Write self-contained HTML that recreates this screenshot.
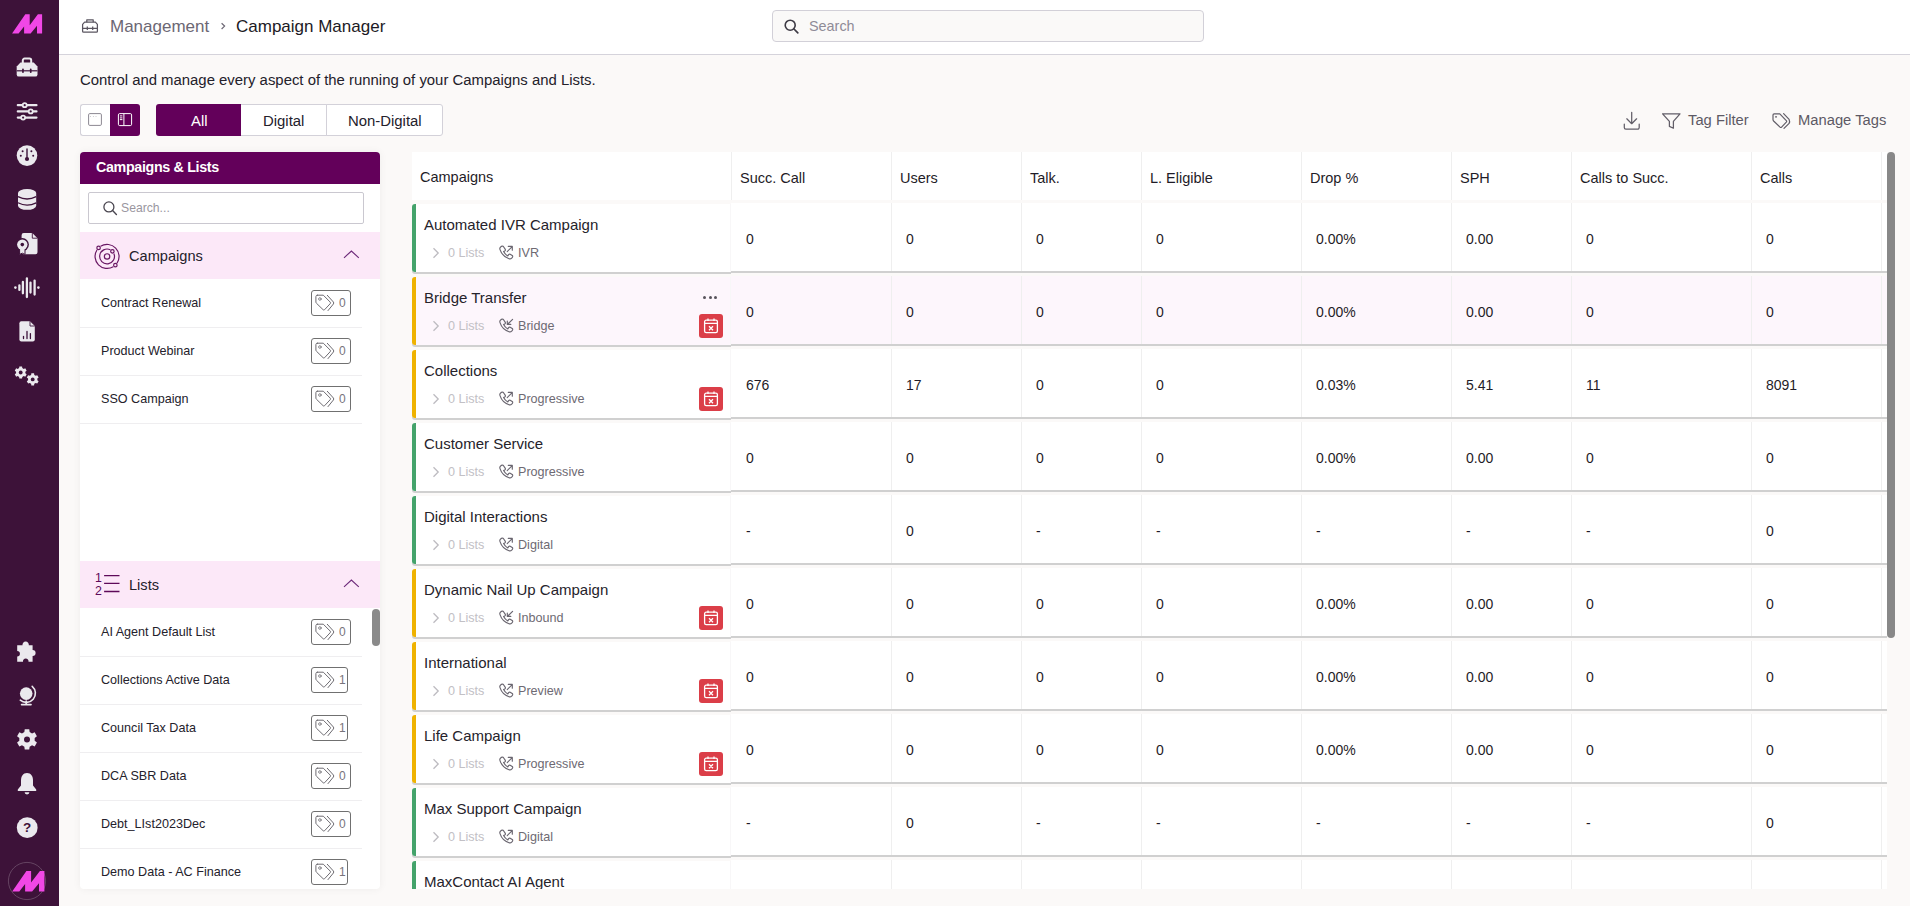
<!DOCTYPE html>
<html><head><meta charset="utf-8">
<style>
*{box-sizing:border-box;margin:0;padding:0}
html,body{width:1910px;height:906px;overflow:hidden}
body{position:relative;background:#fbf9f8;font-family:"Liberation Sans",sans-serif;color:#24212b}
.abs{position:absolute}
.t{position:absolute;white-space:nowrap;line-height:1}
#sb{left:0;top:0;width:59px;height:906px;background:#3d1239}
.si{position:absolute;left:17px;width:20px;height:20px}
#hdr{left:59px;top:0;width:1851px;height:55px;background:#fff;border-bottom:1px solid #d5d3db}
#srch{left:772px;top:10px;width:432px;height:32px;background:#faf9f8;border:1px solid #d2d0d8;border-radius:4px}
.tg{position:absolute;top:104px;height:32px;border:1px solid #d3d1d9;background:#fff}
#panel{left:80px;top:152px;width:300px;height:737px;background:#fff;border-radius:4px;box-shadow:0 0 9px rgba(0,0,0,.055);overflow:hidden}
.sec{position:absolute;left:0;width:300px;height:47px;background:#fce8f8}
.item{position:absolute;left:0;width:282px;height:49px;border-bottom:1px solid #efeef0}
.item .t{left:21px;top:18.3px;font-size:12.6px;color:#24212b}
.badge{position:absolute;top:11px;height:26px;border:1px solid #707070;border-radius:3px}
#tbl{left:412px;top:152px;width:1483px;height:737px;overflow:hidden}
.th{position:absolute;left:0;top:0;width:1475px;height:48px;background:#fff}
.hd{top:18.5px;font-size:14.5px;color:#1f1c27}
.vl{position:absolute;top:0;width:1px;height:100%;background:#efefef}
.tr{position:absolute;left:319px;width:1156px;height:68px;box-shadow:0 2px 0 #d0d0d0}
.fc{position:absolute;left:0;width:319px;height:68px;box-shadow:0 2px 0 #d0d0d0;border-radius:3px 0 0 3px}
.bar{position:absolute;left:0;top:0;width:4px;height:68px;border-radius:3px 0 0 3px}
.nm{left:12px;top:13.2px;font-size:15px;color:#26232b}
.chev{position:absolute;left:20px;top:43px}
.ls{left:36px;top:43px;font-size:12.6px;color:#c2c0c5}
.ph{position:absolute;left:84px;top:37px}
.kd{left:106px;top:43px;font-size:12.6px;color:#6e6a73}
.vv{top:29.25px;font-size:14px;color:#1f1c27}
.cal{position:absolute;left:287px;top:37px;width:24px;height:24px;background:#db3e48;border-radius:3px}
.cal svg{position:absolute;left:0;top:0}
.dots{position:absolute;left:291px;top:19px;width:14px;height:3px}
.dots i{position:absolute;top:0;width:3px;height:3px;border-radius:50%;background:#57535b}
.dots i:nth-child(1){left:0}.dots i:nth-child(2){left:5.5px}.dots i:nth-child(3){left:11px}
.vsb{position:absolute;left:1475px;top:0;width:8px;height:486px;background:#888;border-radius:4px}
</style></head>
<body>
<!-- SIDEBAR -->
<div id="sb" class="abs">
<svg class="abs" style="left:0;top:0" width="59" height="906" viewBox="0 0 59 906">
<g fill="#ebe9ee">
<path d="M12.06 33.6L25.3 14.36H29.7V25.3L37.9 14.36H42.1V33.6H37V25.8L30.6 33.6H24.1V26.55L18.6 33.6Z" fill="#f147e6"/>
<!-- toolbox -->
<path d="M22.8 64V60.4a1.8 1.8 0 0 1 1.8-1.8h4.8a1.8 1.8 0 0 1 1.8 1.8V64" fill="none" stroke="#ebe9ee" stroke-width="2"/>
<path d="M20.5 62.4H33.7L37.5 66.4V74.4a2.2 2.2 0 0 1-2.2 2.2H18.9a2.2 2.2 0 0 1-2.2-2.2V66.4Z"/>
<path d="M16.7 70.8H37.5" stroke="#3d123a" stroke-width="1.2"/>
<rect x="22.1" y="68.6" width="1.7" height="4.4" rx=".8" fill="#3d123a"/><rect x="29.9" y="68.6" width="1.7" height="4.4" rx=".8" fill="#3d123a"/>
<!-- sliders -->
<path d="M17.8 105.2H36.5M17.8 111.4H36.5M17.8 117.6H36.5" stroke="#ebe9ee" stroke-width="2.2" stroke-linecap="round"/>
<circle cx="24.7" cy="105.2" r="2.9"/><circle cx="30.7" cy="111.4" r="2.9"/><circle cx="23.1" cy="117.6" r="2.9"/>
<circle cx="24.7" cy="105.2" r="1.1" fill="#3d123a"/><circle cx="30.7" cy="111.4" r="1.1" fill="#3d123a"/><circle cx="23.1" cy="117.6" r="1.1" fill="#3d123a"/>
<!-- gauge -->
<circle cx="27" cy="155.6" r="10.3"/>
<g fill="#3d123a"><rect x="26.3" y="148.3" width="1.4" height="10" rx=".7"/><circle cx="27" cy="159" r="2.1"/><circle cx="22.6" cy="151.2" r="1"/><circle cx="31.4" cy="151.2" r="1"/><circle cx="20.8" cy="155.8" r="1"/><circle cx="33.2" cy="155.8" r="1"/></g>
<!-- database -->
<path d="M18 193a9.1 4 0 0 1 18.2 0V205.8a9.1 4 0 0 1-18.2 0Z"/>
<path d="M18 196.6Q27 201.4 36.2 196.6M18 202.8Q27 207.6 36.2 202.8" fill="none" stroke="#3d123a" stroke-width="1.3"/>
<!-- certificate doc -->
<path d="M23.8 233H32.3L37.5 238.2V252.2a2 2 0 0 1-2 2H23.6a2 2 0 0 1-2-2V235.2a2.2 2.2 0 0 1 2.2-2.2Z"/>
<path d="M32.3 233V238.2H37.5" fill="none" stroke="#3d123a" stroke-width=".9"/>
<circle cx="22.3" cy="244.6" r="6.6" fill="#3d123a"/>
<path d="M19.6 248.5V254.4L22.3 253.2L25 254.4V248.5Z" stroke="#3d123a" stroke-width="1"/>
<circle cx="22.3" cy="244.6" r="5.2"/><circle cx="22.3" cy="244.6" r="1.8" fill="#3d123a"/>
<!-- waveform -->
<g stroke="#ebe9ee" stroke-width="2.3" stroke-linecap="round"><path d="M19.4 285.3V289.9M22.9 282V293.3M26.9 278.3V297M30.5 282.6V292.6M34.6 280.6V294.6"/></g>
<circle cx="15.4" cy="287.6" r="1.3"/><circle cx="38.4" cy="287.6" r="1.3"/>
<!-- report doc -->
<path d="M21.4 321.2H30L34.8 326V339.5a2 2 0 0 1-2 2H21.4a2 2 0 0 1-2-2V323.2a2 2 0 0 1 2-2Z"/>
<path d="M30 321.2V326H34.8" fill="none" stroke="#3d123a" stroke-width=".9"/>
<g stroke="#3d123a" stroke-width="1.3" stroke-linecap="round"><path d="M23.5 336.3V338.6M27 331.4V338.6M30.4 333.6V338.6"/></g>
<!-- gears -->
<path d="M19.11 368.08L19.35 366.45L22.05 366.45L22.29 368.08L23.73 368.91L25.26 368.30L26.62 370.65L25.33 371.67L25.33 373.33L26.62 374.35L25.26 376.70L23.73 376.09L22.29 376.92L22.05 378.55L19.35 378.55L19.11 376.92L17.67 376.09L16.14 376.70L14.78 374.35L16.07 373.33L16.07 371.67L14.78 370.65L16.14 368.30L17.67 368.91Z"/><circle cx="20.7" cy="372.5" r="1.9" fill="#3d123a"/>
<path d="M31.11 374.98L31.35 373.35L34.05 373.35L34.29 374.98L35.73 375.81L37.26 375.20L38.62 377.55L37.33 378.57L37.33 380.23L38.62 381.25L37.26 383.60L35.73 382.99L34.29 383.82L34.05 385.45L31.35 385.45L31.11 383.82L29.67 382.99L28.14 383.60L26.78 381.25L28.07 380.23L28.07 378.57L26.78 377.55L28.14 375.20L29.67 375.81Z"/><circle cx="32.7" cy="379.4" r="1.9" fill="#3d123a"/>
<!-- puzzle -->
<path d="M17.2 645.3H22.5A3.2 3.2 0 1 1 28.8 645.3H32.6V649.9A3 3 0 1 1 32.6 655.9V661.8H28.5A2.8 2.8 0 1 0 23 661.8H17.2V656.4A2.7 2.7 0 1 0 17.2 651Z"/>
<!-- globe -->
<circle cx="26.2" cy="693.6" r="6.3"/>
<path d="M32.2 686.3A9 9 0 0 1 20.3 700.2" fill="none" stroke="#ebe9ee" stroke-width="1.6" stroke-linecap="round"/>
<path d="M26.2 701V704.3M21.6 704.6H31" stroke="#ebe9ee" stroke-width="1.7" stroke-linecap="round"/>
<!-- gear -->
<path d="M24.36 732.06L24.73 729.25L29.27 729.25L29.64 732.06L32.03 733.44L34.66 732.36L36.92 736.29L34.68 738.02L34.68 740.78L36.92 742.51L34.66 746.44L32.03 745.36L29.64 746.74L29.27 749.55L24.73 749.55L24.36 746.74L21.97 745.36L19.34 746.44L17.08 742.51L19.32 740.78L19.32 738.02L17.08 736.29L19.34 732.36L21.97 733.44Z"/><circle cx="27" cy="739.4" r="3" fill="#3d123a"/>
<!-- bell -->
<path d="M27 772.9C23 772.9 21 776.3 21 780.4V785.6L17.8 789.6V791H36.2V789.6L33 785.6V780.4C33 776.3 31 772.9 27 772.9Z"/>
<path d="M24.6 792.3a2.4 2.1 0 0 0 4.8 0Z"/>
<!-- help -->
<circle cx="27.2" cy="827.7" r="10.4"/>
<text x="27.2" y="832.4" text-anchor="middle" font-family="Liberation Sans" font-weight="700" font-size="13.5" fill="#3d123a">?</text>
<!-- avatar -->
<circle cx="27" cy="881" r="18.6" fill="none" stroke="#6e506c" stroke-width=".8"/>
<path d="M12.2 891.5L26.4 871H31.1V882.6L39.9 871H44.4V891.5H39V883.2L32.1 891.5H25.1V884L19.3 891.5Z" fill="#f147e6"/>
</g>
</svg>
</div>
<!-- HEADER -->
<div id="hdr" class="abs"></div>
<div id="srch" class="abs">
  <svg class="abs" style="left:11px;top:8px" width="15" height="15" viewBox="0 0 15 15"><circle cx="6.2" cy="6.2" r="5" fill="none" stroke="#3d3a44" stroke-width="1.6"/><path d="M10 10 L13.8 13.8" stroke="#3d3a44" stroke-width="1.7" stroke-linecap="round"/></svg>
  <span class="t" style="left:36px;top:8px;font-size:14.4px;color:#8f8b97">Search</span>
</div>
<svg class="abs" style="left:78px;top:14px" width="24" height="24" viewBox="78 14 24 24"><g fill="none" stroke="#5a5560" stroke-width="1.25" stroke-linejoin="round"><path d="M86.8 22.2V19.8H93.2V22.2"/><path d="M84.6 22.2H95.4L97.4 24.4V31.2a1 1 0 0 1-1 1H83.6a1 1 0 0 1-1-1V24.4Z"/><path d="M82.6 28.3H97.4M87.3 26.4V30M92.7 26.4V30"/></g></svg>
<span class="t" style="left:110px;top:18px;font-size:17px;color:#6c6774">Management</span>
<svg class="abs" style="left:219px;top:21px" width="9" height="10" viewBox="0 0 9 10"><path d="M2.6 2.2L5.6 5.1L2.6 8" fill="none" stroke="#6c6774" stroke-width="1.2"/></svg>
<span class="t" style="left:236px;top:18px;font-size:17px;color:#1c1a25">Campaign Manager</span>

<!-- DESCRIPTION -->
<span class="t" style="left:80px;top:73px;font-size:14.9px;color:#24212b">Control and manage every aspect of the running of your Campaigns and Lists.</span>

<!-- TOGGLES -->
<div class="tg" style="left:80px;width:31px;border-radius:3px 0 0 3px;border-right:none"></div>
<div class="abs" style="left:110px;top:104px;width:30px;height:32px;background:#63005a;border-radius:0 3px 3px 0"></div>
<div class="abs" style="left:156px;top:104px;width:85px;height:32px;background:#63005a;border-radius:3px 0 0 3px"></div>
<div class="tg" style="left:241px;width:86px;border-left:none"></div>
<div class="tg" style="left:326px;width:117px;border-radius:0 3px 3px 0"></div>
<svg class="abs" style="left:76px;top:100px" width="70" height="40" viewBox="76 100 70 40"><rect x="88.6" y="113.6" width="12.8" height="11.8" rx="1.2" fill="none" stroke="#8c8892" stroke-width="1"/><g fill="#8c8892"><circle cx="90.5" cy="116.4" r=".45"/><circle cx="93.3" cy="116.4" r=".45"/><circle cx="96" cy="116.4" r=".45"/></g>
<rect x="118.4" y="113.6" width="13.2" height="12" rx="1.3" fill="none" stroke="#fff" stroke-width="1"/><path d="M123.9 113.8V125.4M119.9 115.9H122.4M119.9 117.9H122.4M119.9 119.6H122.4" stroke="#fff" stroke-width="1"/></svg>
<span class="t" style="left:191px;top:114px;font-size:14.9px;color:#fff">All</span>
<span class="t" style="left:263px;top:114px;font-size:14.9px;color:#24212b">Digital</span>
<span class="t" style="left:348px;top:114px;font-size:14.9px;color:#24212b">Non-Digital</span>

<!-- RIGHT TOOLS -->
<svg class="abs" style="left:1615px;top:104.6px" width="185" height="32" viewBox="1615 104 185 32"><g fill="none" stroke="#625e68" stroke-width="1.25" stroke-linecap="round" stroke-linejoin="round">
<path d="M1631.7 111.3V122.6M1626.8 117.8L1631.7 122.7L1636.6 117.8M1624.3 123V126.6a1.6 1.6 0 0 0 1.6 1.6H1637.6a1.6 1.6 0 0 0 1.6-1.6V123"/>
<path d="M1662.6 112.8H1680L1673.4 120.4V127.2L1669.4 125.4V120.4Z"/>
<g stroke-width="1.2"><path d="M1774.2 112.8H1779.8L1786.3 119.6Q1787 120.4 1786.3 121.2L1781.6 126.1Q1780.8 126.9 1780 126.1L1773.6 120Q1773 119.4 1773 118.6V114Q1773 112.8 1774.2 112.8Z"/><path d="M1783.6 112.6L1789.1 118.4Q1790.1 120.4 1789.1 122.4L1784 127.4"/><circle cx="1775.9" cy="115.9" r=".35" stroke-width="1"/></g>
</g></svg>
<span class="t" style="left:1688px;top:113px;font-size:14.75px;color:#5d5965">Tag Filter</span>
<span class="t" style="left:1798px;top:113px;font-size:14.75px;color:#5d5965">Manage Tags</span>

<!-- LEFT PANEL -->
<div id="panel" class="abs">
<div class="abs" style="left:0;top:0;width:300px;height:32px;background:#63005a"></div>
<span class="t" style="left:16px;top:7.6px;font-size:14.3px;letter-spacing:-0.35px;font-weight:700;color:#fff">Campaigns &amp; Lists</span>
<div class="abs" style="left:8px;top:40px;width:276px;height:32px;border:1px solid #cac8d0;border-radius:2px"></div>
<svg class="abs" style="left:22px;top:48px" width="16" height="16" viewBox="0 0 16 16"><circle cx="6.9" cy="6.9" r="5" fill="none" stroke="#4a4650" stroke-width="1.3"/><path d="M10.6 10.6L14.4 14.4" stroke="#4a4650" stroke-width="1.4" stroke-linecap="round"/></svg>
<span class="t" style="left:41px;top:49.6px;font-size:12.2px;color:#9a96a0">Search...</span>
<div class="sec" style="top:80px"></div>
<span class="t" style="left:49px;top:97.4px;font-size:14.6px;color:#24212b">Campaigns</span>
<svg class="abs" style="left:260px;top:94px" width="22" height="16" viewBox="0 0 22 16"><path d="M4 11.8L11.4 5L18.8 11.8" fill="none" stroke="#6d2a7a" stroke-width="1.15"/></svg>
<div class="sec" style="top:409px"></div>
<span class="t" style="left:49px;top:426.4px;font-size:14.6px;color:#24212b">Lists</span>
<svg class="abs" style="left:260px;top:423px" width="22" height="16" viewBox="0 0 22 16"><path d="M4 11.8L11.4 5L18.8 11.8" fill="none" stroke="#6d2a7a" stroke-width="1.15"/></svg>
<svg class="abs" style="left:10px;top:87px" width="34" height="34" viewBox="90 238 34 34"><g fill="none" stroke="#6a1864" stroke-width="1.2">
<path d="M100.60 245.34A12 12 0 0 1 117.02 262.16"/><path d="M113.29 265.71A12 12 0 0 1 96.96 248.98"/>
<path d="M113.81 252.40A7.4 7.4 0 1 1 110.35 248.82"/>
<circle cx="107.07" cy="255.45" r="2.7"/>
<circle cx="98.58" cy="246.96" r="1.75"/><circle cx="112.39" cy="250.31" r="1.75"/><circle cx="115.35" cy="264.14" r="1.75"/></g></svg>
<svg class="abs" style="left:10px;top:414px" width="34" height="34" viewBox="90 566 34 34"><g fill="none" stroke="#5e0a59" stroke-width="1.3">
<path d="M104.1 575.6H119.5M104.1 583.4H119.5M104.1 591.5H119.5"/></g>
<text x="98.5" y="581.8" text-anchor="middle" font-family="Liberation Sans" font-size="12.4" fill="#5e0a59">1</text>
<text x="98.5" y="594.9" text-anchor="middle" font-family="Liberation Sans" font-size="12.4" fill="#5e0a59">2</text></svg>
<div class="item" style="top:127px"><span class="t">Contract Renewal</span></div>
<div class="badge" style="left:231px;top:138px;width:40px"><svg class="abs" style="left:-1px;top:-1px" width="40" height="26" viewBox="311 290 40 26"><g fill="none" stroke="#6e6c72" stroke-width="1" stroke-linecap="round" stroke-linejoin="round"><path d="M317.3 295.2H323.3L330.2 302.1Q330.9 302.9 330.2 303.7L324.6 309.7Q323.9 310.5 323.1 309.7L316.5 303.3Q315.9 302.7 315.9 302V296.6Q315.9 295.2 317.3 295.2Z"/><path d="M327.3 295.3L333.4 302Q334.1 303 333.4 304L328 310.6"/><circle cx="319.9" cy="299" r="1.3" stroke-width=".8"/></g></svg><span class="t" style="left:27px;top:6.4px;font-size:12px;color:#77747b">0</span></div>
<div class="item" style="top:175px"><span class="t">Product Webinar</span></div>
<div class="badge" style="left:231px;top:186px;width:40px"><svg class="abs" style="left:-1px;top:-1px" width="40" height="26" viewBox="311 290 40 26"><g fill="none" stroke="#6e6c72" stroke-width="1" stroke-linecap="round" stroke-linejoin="round"><path d="M317.3 295.2H323.3L330.2 302.1Q330.9 302.9 330.2 303.7L324.6 309.7Q323.9 310.5 323.1 309.7L316.5 303.3Q315.9 302.7 315.9 302V296.6Q315.9 295.2 317.3 295.2Z"/><path d="M327.3 295.3L333.4 302Q334.1 303 333.4 304L328 310.6"/><circle cx="319.9" cy="299" r="1.3" stroke-width=".8"/></g></svg><span class="t" style="left:27px;top:6.4px;font-size:12px;color:#77747b">0</span></div>
<div class="item" style="top:223px"><span class="t">SSO Campaign</span></div>
<div class="badge" style="left:231px;top:234px;width:40px"><svg class="abs" style="left:-1px;top:-1px" width="40" height="26" viewBox="311 290 40 26"><g fill="none" stroke="#6e6c72" stroke-width="1" stroke-linecap="round" stroke-linejoin="round"><path d="M317.3 295.2H323.3L330.2 302.1Q330.9 302.9 330.2 303.7L324.6 309.7Q323.9 310.5 323.1 309.7L316.5 303.3Q315.9 302.7 315.9 302V296.6Q315.9 295.2 317.3 295.2Z"/><path d="M327.3 295.3L333.4 302Q334.1 303 333.4 304L328 310.6"/><circle cx="319.9" cy="299" r="1.3" stroke-width=".8"/></g></svg><span class="t" style="left:27px;top:6.4px;font-size:12px;color:#77747b">0</span></div>
<div class="item" style="top:456px"><span class="t">AI Agent Default List</span></div>
<div class="badge" style="left:231px;top:467px;width:40px"><svg class="abs" style="left:-1px;top:-1px" width="40" height="26" viewBox="311 290 40 26"><g fill="none" stroke="#6e6c72" stroke-width="1" stroke-linecap="round" stroke-linejoin="round"><path d="M317.3 295.2H323.3L330.2 302.1Q330.9 302.9 330.2 303.7L324.6 309.7Q323.9 310.5 323.1 309.7L316.5 303.3Q315.9 302.7 315.9 302V296.6Q315.9 295.2 317.3 295.2Z"/><path d="M327.3 295.3L333.4 302Q334.1 303 333.4 304L328 310.6"/><circle cx="319.9" cy="299" r="1.3" stroke-width=".8"/></g></svg><span class="t" style="left:27px;top:6.4px;font-size:12px;color:#77747b">0</span></div>
<div class="item" style="top:504px"><span class="t">Collections Active Data</span></div>
<div class="badge" style="left:231px;top:515px;width:37px"><svg class="abs" style="left:-1px;top:-1px" width="37" height="26" viewBox="311 290 37 26"><g fill="none" stroke="#6e6c72" stroke-width="1" stroke-linecap="round" stroke-linejoin="round"><path d="M317.3 295.2H323.3L330.2 302.1Q330.9 302.9 330.2 303.7L324.6 309.7Q323.9 310.5 323.1 309.7L316.5 303.3Q315.9 302.7 315.9 302V296.6Q315.9 295.2 317.3 295.2Z"/><path d="M327.3 295.3L333.4 302Q334.1 303 333.4 304L328 310.6"/><circle cx="319.9" cy="299" r="1.3" stroke-width=".8"/></g></svg><span class="t" style="left:27px;top:6.4px;font-size:12px;color:#77747b">1</span></div>
<div class="item" style="top:552px"><span class="t">Council Tax Data</span></div>
<div class="badge" style="left:231px;top:563px;width:37px"><svg class="abs" style="left:-1px;top:-1px" width="37" height="26" viewBox="311 290 37 26"><g fill="none" stroke="#6e6c72" stroke-width="1" stroke-linecap="round" stroke-linejoin="round"><path d="M317.3 295.2H323.3L330.2 302.1Q330.9 302.9 330.2 303.7L324.6 309.7Q323.9 310.5 323.1 309.7L316.5 303.3Q315.9 302.7 315.9 302V296.6Q315.9 295.2 317.3 295.2Z"/><path d="M327.3 295.3L333.4 302Q334.1 303 333.4 304L328 310.6"/><circle cx="319.9" cy="299" r="1.3" stroke-width=".8"/></g></svg><span class="t" style="left:27px;top:6.4px;font-size:12px;color:#77747b">1</span></div>
<div class="item" style="top:600px"><span class="t">DCA SBR Data</span></div>
<div class="badge" style="left:231px;top:611px;width:40px"><svg class="abs" style="left:-1px;top:-1px" width="40" height="26" viewBox="311 290 40 26"><g fill="none" stroke="#6e6c72" stroke-width="1" stroke-linecap="round" stroke-linejoin="round"><path d="M317.3 295.2H323.3L330.2 302.1Q330.9 302.9 330.2 303.7L324.6 309.7Q323.9 310.5 323.1 309.7L316.5 303.3Q315.9 302.7 315.9 302V296.6Q315.9 295.2 317.3 295.2Z"/><path d="M327.3 295.3L333.4 302Q334.1 303 333.4 304L328 310.6"/><circle cx="319.9" cy="299" r="1.3" stroke-width=".8"/></g></svg><span class="t" style="left:27px;top:6.4px;font-size:12px;color:#77747b">0</span></div>
<div class="item" style="top:648px"><span class="t">Debt_LIst2023Dec</span></div>
<div class="badge" style="left:231px;top:659px;width:40px"><svg class="abs" style="left:-1px;top:-1px" width="40" height="26" viewBox="311 290 40 26"><g fill="none" stroke="#6e6c72" stroke-width="1" stroke-linecap="round" stroke-linejoin="round"><path d="M317.3 295.2H323.3L330.2 302.1Q330.9 302.9 330.2 303.7L324.6 309.7Q323.9 310.5 323.1 309.7L316.5 303.3Q315.9 302.7 315.9 302V296.6Q315.9 295.2 317.3 295.2Z"/><path d="M327.3 295.3L333.4 302Q334.1 303 333.4 304L328 310.6"/><circle cx="319.9" cy="299" r="1.3" stroke-width=".8"/></g></svg><span class="t" style="left:27px;top:6.4px;font-size:12px;color:#77747b">0</span></div>
<div class="item" style="top:696px"><span class="t">Demo Data - AC Finance</span></div>
<div class="badge" style="left:231px;top:707px;width:37px"><svg class="abs" style="left:-1px;top:-1px" width="37" height="26" viewBox="311 290 37 26"><g fill="none" stroke="#6e6c72" stroke-width="1" stroke-linecap="round" stroke-linejoin="round"><path d="M317.3 295.2H323.3L330.2 302.1Q330.9 302.9 330.2 303.7L324.6 309.7Q323.9 310.5 323.1 309.7L316.5 303.3Q315.9 302.7 315.9 302V296.6Q315.9 295.2 317.3 295.2Z"/><path d="M327.3 295.3L333.4 302Q334.1 303 333.4 304L328 310.6"/><circle cx="319.9" cy="299" r="1.3" stroke-width=".8"/></g></svg><span class="t" style="left:27px;top:6.4px;font-size:12px;color:#77747b">1</span></div>
<div class="abs" style="left:292px;top:457px;width:8px;height:37px;background:#8a8a8a;border-radius:4px"></div>
</div>

<!-- TABLE -->
<div id="tbl" class="abs">
<div class="th">
<span class="t hd" style="left:8px;top:17.6px">Campaigns</span>
<span class="t hd" style="left:328px">Succ. Call</span>
<span class="t hd" style="left:488px">Users</span>
<span class="t hd" style="left:618px">Talk.</span>
<span class="t hd" style="left:738px">L. Eligible</span>
<span class="t hd" style="left:898px">Drop %</span>
<span class="t hd" style="left:1048px">SPH</span>
<span class="t hd" style="left:1168px">Calls to Succ.</span>
<span class="t hd" style="left:1348px">Calls</span>
<i class="vl" style="left:319px"></i>
<i class="vl" style="left:479px"></i>
<i class="vl" style="left:609px"></i>
<i class="vl" style="left:729px"></i>
<i class="vl" style="left:889px"></i>
<i class="vl" style="left:1039px"></i>
<i class="vl" style="left:1159px"></i>
<i class="vl" style="left:1339px"></i>
<i class="vl" style="left:1469px"></i>
</div>
<div class="tr" style="top:51px;background:#fff">
<span class="t vv" style="left:15px">0</span>
<span class="t vv" style="left:175px">0</span>
<span class="t vv" style="left:305px">0</span>
<span class="t vv" style="left:425px">0</span>
<span class="t vv" style="left:585px">0.00%</span>
<span class="t vv" style="left:735px">0.00</span>
<span class="t vv" style="left:855px">0</span>
<span class="t vv" style="left:1035px">0</span>
<i class="vl" style="left:160px"></i>
<i class="vl" style="left:290px"></i>
<i class="vl" style="left:410px"></i>
<i class="vl" style="left:570px"></i>
<i class="vl" style="left:720px"></i>
<i class="vl" style="left:840px"></i>
<i class="vl" style="left:1020px"></i>
<i class="vl" style="left:1150px"></i>
</div>
<div class="fc" style="top:52px;background:#fff">
<i class="bar" style="background:#44a36b"></i>
<span class="t nm">Automated IVR Campaign</span>
<svg class="chev" width="8" height="12" viewBox="0 0 8 12"><path d="M1.5 1.2L6.2 6L1.5 10.8" fill="none" stroke="#bdbbc0" stroke-width="1.3"/></svg>
<span class="t ls">0 Lists</span>
<svg class="ph" width="22" height="22" viewBox="0 0 22 22"><g fill="none" stroke="#69656f" stroke-width="1.15" stroke-linecap="round" stroke-linejoin="round"><path d="M4.3 6.3C5 5.5 6.2 5 7.2 5.3L9.3 8.4C9.6 9 9.3 9.6 8.7 10L7.6 10.6C8.5 12.5 10 14 11.8 14.9L12.6 13.6C13 13.1 13.6 12.9 14.2 13.2L16.2 14.5C16.7 14.9 16.8 15.5 16.5 16.1L15.7 17.1C15 17.8 14 18 13 17.7C8.8 16.3 5.3 12.6 4 8.6C3.7 7.8 3.8 6.9 4.3 6.3Z"/><path d="M11.2 10.6L16.2 5.6M12.3 5.4H16.3V9.2"/></g></svg>
<span class="t kd">IVR</span>
<i class="vl" style="left:318px;background:#f8f7f8"></i>
</div>
<div class="tr" style="top:124px;background:#fdf6fc">
<span class="t vv" style="left:15px">0</span>
<span class="t vv" style="left:175px">0</span>
<span class="t vv" style="left:305px">0</span>
<span class="t vv" style="left:425px">0</span>
<span class="t vv" style="left:585px">0.00%</span>
<span class="t vv" style="left:735px">0.00</span>
<span class="t vv" style="left:855px">0</span>
<span class="t vv" style="left:1035px">0</span>
<i class="vl" style="left:160px"></i>
<i class="vl" style="left:290px"></i>
<i class="vl" style="left:410px"></i>
<i class="vl" style="left:570px"></i>
<i class="vl" style="left:720px"></i>
<i class="vl" style="left:840px"></i>
<i class="vl" style="left:1020px"></i>
<i class="vl" style="left:1150px"></i>
</div>
<div class="fc" style="top:125px;background:#fdf6fc">
<i class="bar" style="background:#efb200"></i>
<span class="t nm">Bridge Transfer</span>
<svg class="chev" width="8" height="12" viewBox="0 0 8 12"><path d="M1.5 1.2L6.2 6L1.5 10.8" fill="none" stroke="#bdbbc0" stroke-width="1.3"/></svg>
<span class="t ls">0 Lists</span>
<svg class="ph" width="22" height="22" viewBox="0 0 22 22"><g fill="none" stroke="#69656f" stroke-width="1.15" stroke-linecap="round" stroke-linejoin="round"><path d="M4.3 6.3C5 5.5 6.2 5 7.2 5.3L9.3 8.4C9.6 9 9.3 9.6 8.7 10L7.6 10.6C8.5 12.5 10 14 11.8 14.9L12.6 13.6C13 13.1 13.6 12.9 14.2 13.2L16.2 14.5C16.7 14.9 16.8 15.5 16.5 16.1L15.7 17.1C15 17.8 14 18 13 17.7C8.8 16.3 5.3 12.6 4 8.6C3.7 7.8 3.8 6.9 4.3 6.3Z"/><path d="M16.6 5.3L11.4 10.5M11.3 7V10.4H14.8"/></g></svg>
<span class="t kd">Bridge</span>
<div class="dots"><i></i><i></i><i></i></div>
<div class="cal"><svg width="24" height="24" viewBox="0 0 24 24"><rect x="5.6" y="6.2" width="12.8" height="12.4" rx="1.6" fill="none" stroke="#fff" stroke-width="1.3"/><path d="M5.600 9.300H18.400M9 4.400v2.600M15 4.400v2.600M10 12.300l4 4M14 12.300l-4 4" fill="none" stroke="#fff" stroke-width="1.3"/></svg></div>
<i class="vl" style="left:318px;background:#f8f7f8"></i>
</div>
<div class="tr" style="top:197px;background:#fff">
<span class="t vv" style="left:15px">676</span>
<span class="t vv" style="left:175px">17</span>
<span class="t vv" style="left:305px">0</span>
<span class="t vv" style="left:425px">0</span>
<span class="t vv" style="left:585px">0.03%</span>
<span class="t vv" style="left:735px">5.41</span>
<span class="t vv" style="left:855px">11</span>
<span class="t vv" style="left:1035px">8091</span>
<i class="vl" style="left:160px"></i>
<i class="vl" style="left:290px"></i>
<i class="vl" style="left:410px"></i>
<i class="vl" style="left:570px"></i>
<i class="vl" style="left:720px"></i>
<i class="vl" style="left:840px"></i>
<i class="vl" style="left:1020px"></i>
<i class="vl" style="left:1150px"></i>
</div>
<div class="fc" style="top:198px;background:#fff">
<i class="bar" style="background:#efb200"></i>
<span class="t nm">Collections</span>
<svg class="chev" width="8" height="12" viewBox="0 0 8 12"><path d="M1.5 1.2L6.2 6L1.5 10.8" fill="none" stroke="#bdbbc0" stroke-width="1.3"/></svg>
<span class="t ls">0 Lists</span>
<svg class="ph" width="22" height="22" viewBox="0 0 22 22"><g fill="none" stroke="#69656f" stroke-width="1.15" stroke-linecap="round" stroke-linejoin="round"><path d="M4.3 6.3C5 5.5 6.2 5 7.2 5.3L9.3 8.4C9.6 9 9.3 9.6 8.7 10L7.6 10.6C8.5 12.5 10 14 11.8 14.9L12.6 13.6C13 13.1 13.6 12.9 14.2 13.2L16.2 14.5C16.7 14.9 16.8 15.5 16.5 16.1L15.7 17.1C15 17.8 14 18 13 17.7C8.8 16.3 5.3 12.6 4 8.6C3.7 7.8 3.8 6.9 4.3 6.3Z"/><path d="M11.2 10.6L16.2 5.6M12.3 5.4H16.3V9.2"/></g></svg>
<span class="t kd">Progressive</span>
<div class="cal"><svg width="24" height="24" viewBox="0 0 24 24"><rect x="5.6" y="6.2" width="12.8" height="12.4" rx="1.6" fill="none" stroke="#fff" stroke-width="1.3"/><path d="M5.600 9.300H18.400M9 4.400v2.600M15 4.400v2.600M10 12.300l4 4M14 12.300l-4 4" fill="none" stroke="#fff" stroke-width="1.3"/></svg></div>
<i class="vl" style="left:318px;background:#f8f7f8"></i>
</div>
<div class="tr" style="top:270px;background:#fff">
<span class="t vv" style="left:15px">0</span>
<span class="t vv" style="left:175px">0</span>
<span class="t vv" style="left:305px">0</span>
<span class="t vv" style="left:425px">0</span>
<span class="t vv" style="left:585px">0.00%</span>
<span class="t vv" style="left:735px">0.00</span>
<span class="t vv" style="left:855px">0</span>
<span class="t vv" style="left:1035px">0</span>
<i class="vl" style="left:160px"></i>
<i class="vl" style="left:290px"></i>
<i class="vl" style="left:410px"></i>
<i class="vl" style="left:570px"></i>
<i class="vl" style="left:720px"></i>
<i class="vl" style="left:840px"></i>
<i class="vl" style="left:1020px"></i>
<i class="vl" style="left:1150px"></i>
</div>
<div class="fc" style="top:271px;background:#fff">
<i class="bar" style="background:#44a36b"></i>
<span class="t nm">Customer Service</span>
<svg class="chev" width="8" height="12" viewBox="0 0 8 12"><path d="M1.5 1.2L6.2 6L1.5 10.8" fill="none" stroke="#bdbbc0" stroke-width="1.3"/></svg>
<span class="t ls">0 Lists</span>
<svg class="ph" width="22" height="22" viewBox="0 0 22 22"><g fill="none" stroke="#69656f" stroke-width="1.15" stroke-linecap="round" stroke-linejoin="round"><path d="M4.3 6.3C5 5.5 6.2 5 7.2 5.3L9.3 8.4C9.6 9 9.3 9.6 8.7 10L7.6 10.6C8.5 12.5 10 14 11.8 14.9L12.6 13.6C13 13.1 13.6 12.9 14.2 13.2L16.2 14.5C16.7 14.9 16.8 15.5 16.5 16.1L15.7 17.1C15 17.8 14 18 13 17.7C8.8 16.3 5.3 12.6 4 8.6C3.7 7.8 3.8 6.9 4.3 6.3Z"/><path d="M11.2 10.6L16.2 5.6M12.3 5.4H16.3V9.2"/></g></svg>
<span class="t kd">Progressive</span>
<i class="vl" style="left:318px;background:#f8f7f8"></i>
</div>
<div class="tr" style="top:343px;background:#fff">
<span class="t vv" style="left:15px">-</span>
<span class="t vv" style="left:175px">0</span>
<span class="t vv" style="left:305px">-</span>
<span class="t vv" style="left:425px">-</span>
<span class="t vv" style="left:585px">-</span>
<span class="t vv" style="left:735px">-</span>
<span class="t vv" style="left:855px">-</span>
<span class="t vv" style="left:1035px">0</span>
<i class="vl" style="left:160px"></i>
<i class="vl" style="left:290px"></i>
<i class="vl" style="left:410px"></i>
<i class="vl" style="left:570px"></i>
<i class="vl" style="left:720px"></i>
<i class="vl" style="left:840px"></i>
<i class="vl" style="left:1020px"></i>
<i class="vl" style="left:1150px"></i>
</div>
<div class="fc" style="top:344px;background:#fff">
<i class="bar" style="background:#44a36b"></i>
<span class="t nm">Digital Interactions</span>
<svg class="chev" width="8" height="12" viewBox="0 0 8 12"><path d="M1.5 1.2L6.2 6L1.5 10.8" fill="none" stroke="#bdbbc0" stroke-width="1.3"/></svg>
<span class="t ls">0 Lists</span>
<svg class="ph" width="22" height="22" viewBox="0 0 22 22"><g fill="none" stroke="#69656f" stroke-width="1.15" stroke-linecap="round" stroke-linejoin="round"><path d="M4.3 6.3C5 5.5 6.2 5 7.2 5.3L9.3 8.4C9.6 9 9.3 9.6 8.7 10L7.6 10.6C8.5 12.5 10 14 11.8 14.9L12.6 13.6C13 13.1 13.6 12.9 14.2 13.2L16.2 14.5C16.7 14.9 16.8 15.5 16.5 16.1L15.7 17.1C15 17.8 14 18 13 17.7C8.8 16.3 5.3 12.6 4 8.6C3.7 7.8 3.8 6.9 4.3 6.3Z"/><path d="M11.2 10.6L16.2 5.6M12.3 5.4H16.3V9.2"/></g></svg>
<span class="t kd">Digital</span>
<i class="vl" style="left:318px;background:#f8f7f8"></i>
</div>
<div class="tr" style="top:416px;background:#fff">
<span class="t vv" style="left:15px">0</span>
<span class="t vv" style="left:175px">0</span>
<span class="t vv" style="left:305px">0</span>
<span class="t vv" style="left:425px">0</span>
<span class="t vv" style="left:585px">0.00%</span>
<span class="t vv" style="left:735px">0.00</span>
<span class="t vv" style="left:855px">0</span>
<span class="t vv" style="left:1035px">0</span>
<i class="vl" style="left:160px"></i>
<i class="vl" style="left:290px"></i>
<i class="vl" style="left:410px"></i>
<i class="vl" style="left:570px"></i>
<i class="vl" style="left:720px"></i>
<i class="vl" style="left:840px"></i>
<i class="vl" style="left:1020px"></i>
<i class="vl" style="left:1150px"></i>
</div>
<div class="fc" style="top:417px;background:#fff">
<i class="bar" style="background:#efb200"></i>
<span class="t nm">Dynamic Nail Up Campaign</span>
<svg class="chev" width="8" height="12" viewBox="0 0 8 12"><path d="M1.5 1.2L6.2 6L1.5 10.8" fill="none" stroke="#bdbbc0" stroke-width="1.3"/></svg>
<span class="t ls">0 Lists</span>
<svg class="ph" width="22" height="22" viewBox="0 0 22 22"><g fill="none" stroke="#69656f" stroke-width="1.15" stroke-linecap="round" stroke-linejoin="round"><path d="M4.3 6.3C5 5.5 6.2 5 7.2 5.3L9.3 8.4C9.6 9 9.3 9.6 8.7 10L7.6 10.6C8.5 12.5 10 14 11.8 14.9L12.6 13.6C13 13.1 13.6 12.9 14.2 13.2L16.2 14.5C16.7 14.9 16.8 15.5 16.5 16.1L15.7 17.1C15 17.8 14 18 13 17.7C8.8 16.3 5.3 12.6 4 8.6C3.7 7.8 3.8 6.9 4.3 6.3Z"/><path d="M16.6 5.3L11.4 10.5M11.3 7V10.4H14.8"/></g></svg>
<span class="t kd">Inbound</span>
<div class="cal"><svg width="24" height="24" viewBox="0 0 24 24"><rect x="5.6" y="6.2" width="12.8" height="12.4" rx="1.6" fill="none" stroke="#fff" stroke-width="1.3"/><path d="M5.600 9.300H18.400M9 4.400v2.600M15 4.400v2.600M10 12.300l4 4M14 12.300l-4 4" fill="none" stroke="#fff" stroke-width="1.3"/></svg></div>
<i class="vl" style="left:318px;background:#f8f7f8"></i>
</div>
<div class="tr" style="top:489px;background:#fff">
<span class="t vv" style="left:15px">0</span>
<span class="t vv" style="left:175px">0</span>
<span class="t vv" style="left:305px">0</span>
<span class="t vv" style="left:425px">0</span>
<span class="t vv" style="left:585px">0.00%</span>
<span class="t vv" style="left:735px">0.00</span>
<span class="t vv" style="left:855px">0</span>
<span class="t vv" style="left:1035px">0</span>
<i class="vl" style="left:160px"></i>
<i class="vl" style="left:290px"></i>
<i class="vl" style="left:410px"></i>
<i class="vl" style="left:570px"></i>
<i class="vl" style="left:720px"></i>
<i class="vl" style="left:840px"></i>
<i class="vl" style="left:1020px"></i>
<i class="vl" style="left:1150px"></i>
</div>
<div class="fc" style="top:490px;background:#fff">
<i class="bar" style="background:#efb200"></i>
<span class="t nm">International</span>
<svg class="chev" width="8" height="12" viewBox="0 0 8 12"><path d="M1.5 1.2L6.2 6L1.5 10.8" fill="none" stroke="#bdbbc0" stroke-width="1.3"/></svg>
<span class="t ls">0 Lists</span>
<svg class="ph" width="22" height="22" viewBox="0 0 22 22"><g fill="none" stroke="#69656f" stroke-width="1.15" stroke-linecap="round" stroke-linejoin="round"><path d="M4.3 6.3C5 5.5 6.2 5 7.2 5.3L9.3 8.4C9.6 9 9.3 9.6 8.7 10L7.6 10.6C8.5 12.5 10 14 11.8 14.9L12.6 13.6C13 13.1 13.6 12.9 14.2 13.2L16.2 14.5C16.7 14.9 16.8 15.5 16.5 16.1L15.7 17.1C15 17.8 14 18 13 17.7C8.8 16.3 5.3 12.6 4 8.6C3.7 7.8 3.8 6.9 4.3 6.3Z"/><path d="M11.2 10.6L16.2 5.6M12.3 5.4H16.3V9.2"/></g></svg>
<span class="t kd">Preview</span>
<div class="cal"><svg width="24" height="24" viewBox="0 0 24 24"><rect x="5.6" y="6.2" width="12.8" height="12.4" rx="1.6" fill="none" stroke="#fff" stroke-width="1.3"/><path d="M5.600 9.300H18.400M9 4.400v2.600M15 4.400v2.600M10 12.300l4 4M14 12.300l-4 4" fill="none" stroke="#fff" stroke-width="1.3"/></svg></div>
<i class="vl" style="left:318px;background:#f8f7f8"></i>
</div>
<div class="tr" style="top:562px;background:#fff">
<span class="t vv" style="left:15px">0</span>
<span class="t vv" style="left:175px">0</span>
<span class="t vv" style="left:305px">0</span>
<span class="t vv" style="left:425px">0</span>
<span class="t vv" style="left:585px">0.00%</span>
<span class="t vv" style="left:735px">0.00</span>
<span class="t vv" style="left:855px">0</span>
<span class="t vv" style="left:1035px">0</span>
<i class="vl" style="left:160px"></i>
<i class="vl" style="left:290px"></i>
<i class="vl" style="left:410px"></i>
<i class="vl" style="left:570px"></i>
<i class="vl" style="left:720px"></i>
<i class="vl" style="left:840px"></i>
<i class="vl" style="left:1020px"></i>
<i class="vl" style="left:1150px"></i>
</div>
<div class="fc" style="top:563px;background:#fff">
<i class="bar" style="background:#efb200"></i>
<span class="t nm">Life Campaign</span>
<svg class="chev" width="8" height="12" viewBox="0 0 8 12"><path d="M1.5 1.2L6.2 6L1.5 10.8" fill="none" stroke="#bdbbc0" stroke-width="1.3"/></svg>
<span class="t ls">0 Lists</span>
<svg class="ph" width="22" height="22" viewBox="0 0 22 22"><g fill="none" stroke="#69656f" stroke-width="1.15" stroke-linecap="round" stroke-linejoin="round"><path d="M4.3 6.3C5 5.5 6.2 5 7.2 5.3L9.3 8.4C9.6 9 9.3 9.6 8.7 10L7.6 10.6C8.5 12.5 10 14 11.8 14.9L12.6 13.6C13 13.1 13.6 12.9 14.2 13.2L16.2 14.5C16.7 14.9 16.8 15.5 16.5 16.1L15.7 17.1C15 17.8 14 18 13 17.7C8.8 16.3 5.3 12.6 4 8.6C3.7 7.8 3.8 6.9 4.3 6.3Z"/><path d="M11.2 10.6L16.2 5.6M12.3 5.4H16.3V9.2"/></g></svg>
<span class="t kd">Progressive</span>
<div class="cal"><svg width="24" height="24" viewBox="0 0 24 24"><rect x="5.6" y="6.2" width="12.8" height="12.4" rx="1.6" fill="none" stroke="#fff" stroke-width="1.3"/><path d="M5.600 9.300H18.400M9 4.400v2.600M15 4.400v2.600M10 12.300l4 4M14 12.300l-4 4" fill="none" stroke="#fff" stroke-width="1.3"/></svg></div>
<i class="vl" style="left:318px;background:#f8f7f8"></i>
</div>
<div class="tr" style="top:635px;background:#fff">
<span class="t vv" style="left:15px">-</span>
<span class="t vv" style="left:175px">0</span>
<span class="t vv" style="left:305px">-</span>
<span class="t vv" style="left:425px">-</span>
<span class="t vv" style="left:585px">-</span>
<span class="t vv" style="left:735px">-</span>
<span class="t vv" style="left:855px">-</span>
<span class="t vv" style="left:1035px">0</span>
<i class="vl" style="left:160px"></i>
<i class="vl" style="left:290px"></i>
<i class="vl" style="left:410px"></i>
<i class="vl" style="left:570px"></i>
<i class="vl" style="left:720px"></i>
<i class="vl" style="left:840px"></i>
<i class="vl" style="left:1020px"></i>
<i class="vl" style="left:1150px"></i>
</div>
<div class="fc" style="top:636px;background:#fff">
<i class="bar" style="background:#44a36b"></i>
<span class="t nm">Max Support Campaign</span>
<svg class="chev" width="8" height="12" viewBox="0 0 8 12"><path d="M1.5 1.2L6.2 6L1.5 10.8" fill="none" stroke="#bdbbc0" stroke-width="1.3"/></svg>
<span class="t ls">0 Lists</span>
<svg class="ph" width="22" height="22" viewBox="0 0 22 22"><g fill="none" stroke="#69656f" stroke-width="1.15" stroke-linecap="round" stroke-linejoin="round"><path d="M4.3 6.3C5 5.5 6.2 5 7.2 5.3L9.3 8.4C9.6 9 9.3 9.6 8.7 10L7.6 10.6C8.5 12.5 10 14 11.8 14.9L12.6 13.6C13 13.1 13.6 12.9 14.2 13.2L16.2 14.5C16.7 14.9 16.8 15.5 16.5 16.1L15.7 17.1C15 17.8 14 18 13 17.7C8.8 16.3 5.3 12.6 4 8.6C3.7 7.8 3.8 6.9 4.3 6.3Z"/><path d="M11.2 10.6L16.2 5.6M12.3 5.4H16.3V9.2"/></g></svg>
<span class="t kd">Digital</span>
<i class="vl" style="left:318px;background:#f8f7f8"></i>
</div>
<div class="tr" style="top:708px;background:#fff">
<span class="t vv" style="left:15px">-</span>
<span class="t vv" style="left:175px">0</span>
<span class="t vv" style="left:305px">-</span>
<span class="t vv" style="left:425px">-</span>
<span class="t vv" style="left:585px">-</span>
<span class="t vv" style="left:735px">-</span>
<span class="t vv" style="left:855px">-</span>
<span class="t vv" style="left:1035px">0</span>
<i class="vl" style="left:160px"></i>
<i class="vl" style="left:290px"></i>
<i class="vl" style="left:410px"></i>
<i class="vl" style="left:570px"></i>
<i class="vl" style="left:720px"></i>
<i class="vl" style="left:840px"></i>
<i class="vl" style="left:1020px"></i>
<i class="vl" style="left:1150px"></i>
</div>
<div class="fc" style="top:709px;background:#fff">
<i class="bar" style="background:#44a36b"></i>
<span class="t nm">MaxContact AI Agent</span>
<svg class="chev" width="8" height="12" viewBox="0 0 8 12"><path d="M1.5 1.2L6.2 6L1.5 10.8" fill="none" stroke="#bdbbc0" stroke-width="1.3"/></svg>
<span class="t ls">0 Lists</span>
<svg class="ph" width="22" height="22" viewBox="0 0 22 22"><g fill="none" stroke="#69656f" stroke-width="1.15" stroke-linecap="round" stroke-linejoin="round"><path d="M4.3 6.3C5 5.5 6.2 5 7.2 5.3L9.3 8.4C9.6 9 9.3 9.6 8.7 10L7.6 10.6C8.5 12.5 10 14 11.8 14.9L12.6 13.6C13 13.1 13.6 12.9 14.2 13.2L16.2 14.5C16.7 14.9 16.8 15.5 16.5 16.1L15.7 17.1C15 17.8 14 18 13 17.7C8.8 16.3 5.3 12.6 4 8.6C3.7 7.8 3.8 6.9 4.3 6.3Z"/><path d="M11.2 10.6L16.2 5.6M12.3 5.4H16.3V9.2"/></g></svg>
<span class="t kd">Digital</span>
<i class="vl" style="left:318px;background:#f8f7f8"></i>
</div>
<div class="vsb"></div>
</div>
</body></html>
